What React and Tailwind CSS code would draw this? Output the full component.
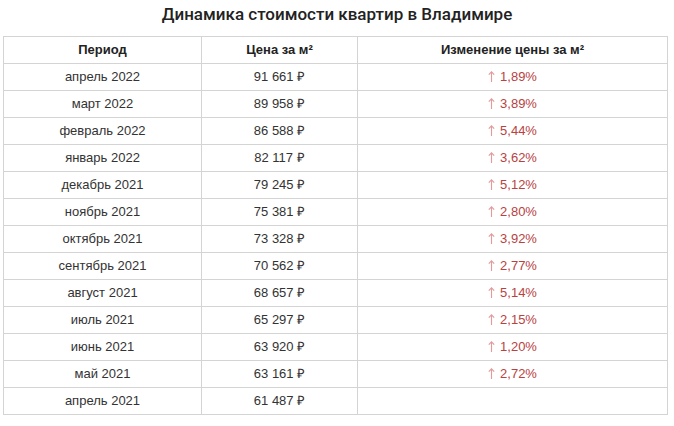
import React from 'react';

const rows = [
    ['апрель 2022', '91 661 ₽', '1,89%'],
    ['март 2022', '89 958 ₽', '3,89%'],
    ['февраль 2022', '86 588 ₽', '5,44%'],
    ['январь 2022', '82 117 ₽', '3,62%'],
    ['декабрь 2021', '79 245 ₽', '5,12%'],
    ['ноябрь 2021', '75 381 ₽', '2,80%'],
    ['октябрь 2021', '73 328 ₽', '3,92%'],
    ['сентябрь 2021', '70 562 ₽', '2,77%'],
    ['август 2021', '68 657 ₽', '5,14%'],
    ['июль 2021', '65 297 ₽', '2,15%'],
    ['июнь 2021', '63 920 ₽', '1,20%'],
    ['май 2021', '63 161 ₽', '2,72%'],
    ['апрель 2021', '61 487 ₽', ''],
];

// thin up arrow like the one in the screenshot
const UpArrow = () => (
    <svg width="7" height="11" viewBox="0 0 7 11" className="inline-block mr-[5px] align-[-1px]">
        <path d="M3.5 11V1M0.8 3.6L3.5 0.8L6.2 3.6" fill="none" stroke="#e39a9a" strokeWidth="1.1" />
    </svg>
);

const App = () => {
    return (
        <div className="w-[674px] h-[426px] bg-white overflow-hidden font-['Liberation_Sans',Arial,sans-serif]">
            <h1 className="h-[30px] pt-[3px] text-center text-[17px] leading-[22px] font-medium text-[#222] font-['Roboto',sans-serif]">
                Динамика стоимости квартир в Владимире
            </h1>
            <div className="pt-[6px] pl-[3px]">
                <table className="w-[665px] border-collapse text-[13px] text-[#333] table-fixed">
                    <colgroup>
                        <col className="w-[198px]" />
                        <col className="w-[156px]" />
                        <col />
                    </colgroup>
                    <thead>
                        <tr className="h-[27px]">
                            <th className="border border-[#d4d4d4] font-bold text-[#222]">Период</th>
                            <th className="border border-[#d4d4d4] font-bold text-[#222]">Цена за м²</th>
                            <th className="border border-[#d4d4d4] font-bold text-[#222]">Изменение цены за м²</th>
                        </tr>
                    </thead>
                    <tbody>
                        {rows.map(([period, price, change]) => (
                            <tr key={period} className="h-[27px]">
                                <td className="border border-[#d4d4d4] text-center">{period}</td>
                                <td className="border border-[#d4d4d4] text-center">{price}</td>
                                <td className="border border-[#d4d4d4] text-center text-[#b8423f]">
                                    {change && <><UpArrow />{change}</>}
                                </td>
                            </tr>
                        ))}
                    </tbody>
                </table>
            </div>
        </div>
    );
};

export default App;
